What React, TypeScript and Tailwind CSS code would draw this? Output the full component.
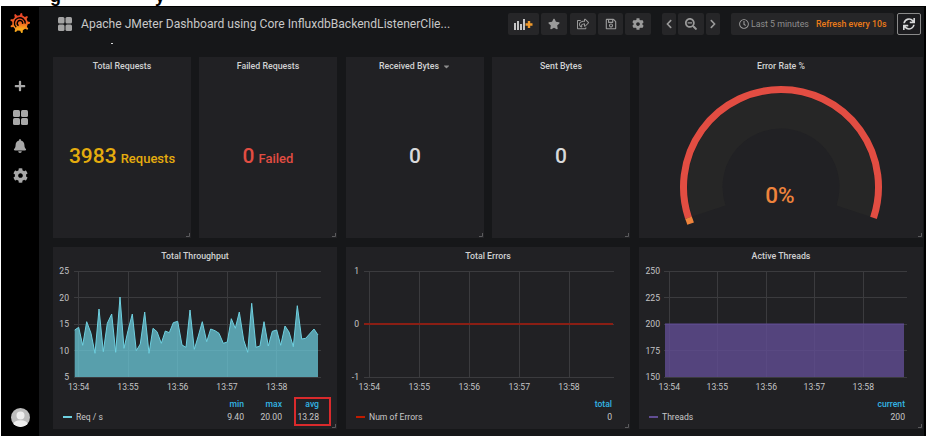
import React from "react";
import { FaPlus, FaBell, FaCog, FaStar, FaRegShareSquare, FaRegSave, FaChevronLeft, FaChevronRight, FaSearchMinus, FaRegClock, FaSync, FaCaretDown } from "react-icons/fa";

const Grid = ({ size, gap = 1 }: { size: number; gap?: number }) => {
  const c = (size - gap) / 2;
  return (
    <svg width={size} height={size} viewBox={`0 0 ${size} ${size}`} fill="currentColor" className="block">
      <rect x={0} y={0} width={c} height={c} rx={1.5} />
      <rect x={c + gap} y={0} width={c} height={c} rx={1.5} />
      <rect x={0} y={c + gap} width={c} height={c} rx={1.5} />
      <rect x={c + gap} y={c + gap} width={c} height={c} rx={1.5} />
    </svg>
  );
};

const gearPoints = () => {
  const pts: string[] = [];
  const n = 9;
  for (let i = 0; i < n; i++) {
    const a = (i / n) * Math.PI * 2 - Math.PI / 2 + 0.15;
    const s = Math.PI / n;
    [[-0.5, 7.8], [-0.2, 10], [0.2, 10], [0.5, 7.8]].forEach(([o, r]) => {
      const t = a + (o as number) * s;
      pts.push(`${(10 + (r as number) * Math.cos(t)).toFixed(2)},${(10 + (r as number) * Math.sin(t)).toFixed(2)}`);
    });
  }
  return pts.join(" ");
};

const Logo = () => (
  <svg width="20" height="20" viewBox="0 0 20 20" className="block">
    <defs>
      <linearGradient id="lg" x1="0" y1="0" x2="0" y2="1">
        <stop offset="0" stopColor="#e8402a" />
        <stop offset="0.55" stopColor="#f26a1f" />
        <stop offset="1" stopColor="#f9b81c" />
      </linearGradient>
    </defs>
    <polygon points={gearPoints()} fill="url(#lg)" />
    <circle cx="10" cy="10" r="7" fill="url(#lg)" />
    <path d="M6.2 14.2A5.4 5.4 0 1 1 15.2 10.6" fill="none" stroke="#000" strokeWidth="1.4" />
    <path d="M12.6 10.8A2.7 2.7 0 1 0 8.6 12.6" fill="none" stroke="#000" strokeWidth="1.4" />
  </svg>
);

const Avatar = () => (
  <svg width="19" height="19" viewBox="0 0 19 19" className="block">
    <defs>
      <clipPath id="av"><circle cx="9.5" cy="9.5" r="9.5" /></clipPath>
    </defs>
    <circle cx="9.5" cy="9.5" r="9.5" fill="#bdbdbd" />
    <g clipPath="url(#av)" fill="#eeeeee">
      <circle cx="9.5" cy="7.5" r="4" />
      <ellipse cx="9.5" cy="17" rx="7.5" ry="4.8" />
    </g>
  </svg>
);

const AddPanel = () => (
  <svg width="19" height="11" viewBox="0 0 19 11">
    <g fill="#c4c4c4">
      <rect x="0" y="4" width="2" height="7" />
      <rect x="3" y="2" width="2" height="9" />
      <rect x="6" y="5" width="2" height="6" />
      <rect x="9" y="0" width="2" height="11" />
    </g>
    <path d="M15 2v7M11.5 5.5h7" stroke="#f09a2c" strokeWidth="2.4" />
  </svg>
);

const Btn = ({ className, children }: { className: string; children?: React.ReactNode }) => (
  <div className={`h-[22px] bg-[#262628] rounded-[2px] flex items-center justify-center text-[#9a9a9a] ${className}`}>{children}</div>
);

const Corner = () => (
  <svg width="4" height="4" viewBox="0 0 4 4" className="absolute right-[1px] bottom-[1px]">
    <path d="M3.5 0v3.5H0" fill="none" stroke="#5a5a5c" strokeWidth="1" />
  </svg>
);

const Panel = ({ title, caret, children }: { title: string; caret?: boolean; children?: React.ReactNode }) => (
  <div className="relative bg-[#212124] flex flex-col min-w-0">
    <div className="h-[17px] pt-[2px] flex items-center justify-center gap-[3px] text-[8.8px] leading-none font-medium text-[#d0d1d2]">
      <span>{title}</span>
      {caret && <FaCaretDown className="text-[#8e8e8e]" size={9} />}
    </div>
    {children}
    <Corner />
  </div>
);

const Stat = ({ title, value, suffix, color, caret }: { title: string; value: string; suffix?: string; color: string; caret?: boolean }) => (
  <Panel title={title} caret={caret}>
    <div className={`flex-1 flex items-baseline justify-center pt-[65px] font-medium ${color}`}>
      <span className="text-[21px] leading-[34px]">{value}</span>
      {suffix && <span className="text-[13px] ml-[4px]">{suffix}</span>}
    </div>
  </Panel>
);

const Gauge = () => {
  const cx = 142, cy = 130;
  const p = (r: number, deg: number) => {
    const a = (deg * Math.PI) / 180;
    return `${(cx + r * Math.cos(a)).toFixed(2)} ${(cy + r * Math.sin(a)).toFixed(2)}`;
  };
  const arc = (r: number, a0: number, a1: number, large: number) => `M${p(r, a0)}A${r} ${r} 0 ${large} 1 ${p(r, a1)}`;
  return (
    <Panel title="Error Rate %">
      <svg width="284" height="164" viewBox="0 17 284 164" className="block">
        <path d={arc(76, 161.6, 18.4, 1)} fill="none" stroke="#262626" strokeWidth="35" />
        <path d={arc(97.5, 161.6, 18.4, 1)} fill="none" stroke="#e24d42" strokeWidth="7" />
        <path d={arc(97.5, 161.6, 158, 0)} fill="none" stroke="#ef843c" strokeWidth="7" />
        <text x="141" y="146" textAnchor="middle" fontSize="22.5" fontWeight="500" fill="#ef843c">0%</text>
      </svg>
    </Panel>
  );
};

const rows = [
  [224,270],[236,262],[248,316],[260,245],[273,280],[285,340],[297,207],[310,335],[322,250],[335,222],[347,337],[360,171],[372,325],[384,272],[397,222],[409,332],[421,312],[434,216],[447,340],[459,265],[471,275],[484,310],[496,273],[508,278],[520,248],[533,244],[546,315],[558,322],[570,210],[583,328],[595,288],[607,245],[620,305],[632,267],[645,272],[657,280],[670,310],[682,306],[694,236],[706,265],[718,216],[731,300],[743,337],[755,190],[768,322],[780,318],[792,245],[805,318],[817,274],[830,270],[842,316],[855,258],[867,276],[880,320],[892,197],[905,297],[917,295],[942,267],[954,285],
];
const tp = rows.map(([x, y]) => [x / 3 - 53, y / 3 + 240 - 247] as const);
const tpLine = tp.map(([x, y]) => `${x.toFixed(1)},${y.toFixed(1)}`).join(" ");
const tpArea = `${tp[0][0].toFixed(1)},130 ${tpLine} ${tp[tp.length - 1][0].toFixed(1)},130`;

const Chart = ({ yLabels, yEnd, x0, xTicks, children }: { yLabels: string[]; yEnd: number; x0: number; xTicks: number[]; children?: React.ReactNode }) => {
  const times = ["13:54", "13:55", "13:56", "13:57", "13:58"];
  const step = 106 / (yLabels.length - 1);
  return (
    <svg width="284" height="133" viewBox="0 17 284 133" className="block">
      <g stroke="#3b3b3e" strokeWidth="1" shapeRendering="crispEdges">
        {yLabels.map((_, i) => <line key={i} x1={x0} x2={268} y1={24 + i * step} y2={24 + i * step} />)}
        {xTicks.map((x) => <line key={x} x1={x} x2={x} y1={24} y2={130} />)}
      </g>
      {children}
      <g fontSize="8.6" fill="#c4c4c4">
        {yLabels.map((l, i) => <text key={l} x={yEnd} y={27 + i * step} textAnchor="end">{l}</text>)}
        {xTicks.map((x, i) => <text key={x} x={x} y={143} textAnchor="middle">{times[i]}</text>)}
      </g>
    </svg>
  );
};

const Swatch = ({ color }: { color: string }) => <span className={`w-[9px] h-[2px] ${color}`} />;

const Head = ({ children }: { children: React.ReactNode }) => (
  <div className="h-[13px] leading-[14px] text-[#33b5e5] font-medium">{children}</div>
);

const Legend = ({ color, name, children }: { color: string; name: string; children: React.ReactNode }) => (
  <div className="flex h-[31px] pl-[10px] text-[8.6px] text-[#c8c8c8]">
    <div className="flex-1 flex items-center gap-[4px] pt-[13px] h-[27px] min-w-0">
      <Swatch color={color} />
      <span>{name}</span>
    </div>
    {children}
  </div>
);

const LegendOne = ({ color, name, head, value }: { color: string; name: string; head: string; value: string }) => (
  <Legend color={color} name={name}>
    <div className="pr-[18px] text-right">
      <Head>{head}</Head>
      <div className="h-[14px] leading-[14px]">{value}</div>
    </div>
  </Legend>
);

export default function App() {
  return (
    <div className="w-[929px] h-[436px] bg-white flex flex-col overflow-hidden font-['Roboto',sans-serif]">
      <div className="h-[6px] overflow-hidden flex text-black font-['Liberation_Sans',sans-serif] font-bold text-[18px] leading-none">
        <span className="ml-[50px] -mt-[13px]">g</span>
        <span className="ml-[94px] -mt-[13px]">y</span>
      </div>
      <div className="flex-1 flex min-h-0">
        <div className="w-[1px] bg-white" />
        <aside className="w-[38px] bg-black border-t border-black flex flex-col items-center text-[#a8a8a8]">
          <div className="mt-[6px]"><Logo /></div>
          <FaPlus size={12} className="mt-[47px]" />
          <div className="mt-[18px]"><Grid size={15} /></div>
          <FaBell size={14} className="mt-[14px]" />
          <FaCog size={15} className="mt-[15px]" />
          <div className="mt-auto mb-[9px]"><Avatar /></div>
        </aside>
        <main className="w-[885px] bg-[#161719] border-t border-black flex flex-col">
          <header className="h-[34px] flex items-center pl-[19px] pr-[3px] shrink-0">
            <div className="text-[#a4a4a4]"><Grid size={14} /></div>
            <h1 className="ml-[9px] text-[12.1px] leading-none text-[#c8c8c8] font-normal whitespace-nowrap">Apache JMeter Dashboard using Core InfluxdbBackendListenerClie...</h1>
            <div className="ml-auto flex items-center">
              <Btn className="w-[31px]"><AddPanel /></Btn>
              <Btn className="w-[26px] ml-[2px]"><FaStar size={12} /></Btn>
              <Btn className="w-[26px] ml-[3px]"><FaRegShareSquare size={12} /></Btn>
              <Btn className="w-[25px] ml-[2px]"><FaRegSave size={12} /></Btn>
              <Btn className="w-[26px] ml-[2px]"><FaCog size={12} /></Btn>
              <Btn className="w-[14px] ml-[11px]"><FaChevronLeft size={10} /></Btn>
              <Btn className="w-[26px] ml-[2px]"><FaSearchMinus size={12} /></Btn>
              <Btn className="w-[14px] ml-[2px]"><FaChevronRight size={10} /></Btn>
              <Btn className="w-[163px] ml-[11px] text-[8.8px] leading-none !justify-start pl-[8px] whitespace-nowrap">
                <FaRegClock size={10} />
                <span className="ml-[2px] text-[#8e8e8e]">Last 5 minutes</span>
                <span className="ml-[7px] font-medium text-[#eb7b18]">Refresh every 10s</span>
              </Btn>
              <div className="w-[24px] h-[22px] ml-[3px] border border-[#8a8a8a] rounded-[2px] bg-[#1c1c1f] flex items-center justify-center text-[#d8d9da]"><FaSync size={12} /></div>
            </div>
          </header>
          <div className="h-[16px] shrink-0">
            <div className="ml-[72px] mt-[2px] w-[2px] h-[1px] bg-[#d8d9da]" />
          </div>
          <div className="ml-[14px] w-[870px] grid grid-cols-3 grid-rows-[181px_182px] gap-[9px]">
            <div className="grid grid-cols-2 gap-[8px]">
              <Stat title="Total Requests" value="3983" suffix="Requests" color="text-[#e5ac0e]" />
              <Stat title="Failed Requests" value="0" suffix="Failed" color="text-[#e24d42]" />
            </div>
            <div className="grid grid-cols-2 gap-[8px]">
              <Stat title="Received Bytes" caret value="0" color="text-[#d8d9da]" />
              <Stat title="Sent Bytes" value="0" color="text-[#d8d9da]" />
            </div>
            <Gauge />
            <Panel title="Total Throughput">
              <Chart yLabels={["25", "20", "15", "10", "5"]} yEnd={16} x0={21} xTicks={[25.7, 75, 124.7, 174, 223.7]}>
                <polygon points={tpArea} fill="#6ed0e0" fillOpacity="0.72" />
                <polyline points={tpLine} fill="none" stroke="#6ed0e0" strokeWidth="1" />
              </Chart>
              <Legend color="bg-[#6ed0e0]" name="Req / s">
                <div className="text-right">
                  <Head>min</Head>
                  <div className="h-[14px] leading-[14px]">9.40</div>
                </div>
                <div className="w-[38px] text-right">
                  <Head>max</Head>
                  <div className="h-[14px] leading-[14px]">20.00</div>
                </div>
                <div className="w-[37px] h-[29px] ml-[12px] mr-[6px] pr-[10px] -mb-[2px] border-2 border-[#d92a2c] text-right">
                  <div className="-mt-[2px]">
                    <Head>avg</Head>
                    <div className="h-[14px] leading-[14px]">13.28</div>
                  </div>
                </div>
              </Legend>
            </Panel>
            <Panel title="Total Errors">
              <Chart yLabels={["1", "0", "-1"]} yEnd={13} x0={18} xTicks={[23.3, 73.3, 123.3, 173.3, 223]}>
                <line x1="18" x2="267" y1="77" y2="77" stroke="#8a1e14" strokeWidth="2" />
              </Chart>
              <LegendOne color="bg-[#bf1b00]" name="Num of Errors" head="total" value="0" />
            </Panel>
            <Panel title="Active Threads">
              <Chart yLabels={["250", "225", "200", "175", "150"]} yEnd={21} x0={25} xTicks={[30.3, 78.3, 127.3, 175.3, 224.3]}>
                <rect x="26" y="77" width="239" height="53" fill="#614d93" fillOpacity="0.8" />
                <line x1="26" x2="265" y1="77" y2="77" stroke="#614d93" strokeWidth="1" />
              </Chart>
              <LegendOne color="bg-[#614d93]" name="Threads" head="current" value="200" />
            </Panel>
          </div>
        </main>
        <div className="w-[2px] bg-black" />
        <div className="flex-1 bg-white" />
      </div>
    </div>
  );
}
